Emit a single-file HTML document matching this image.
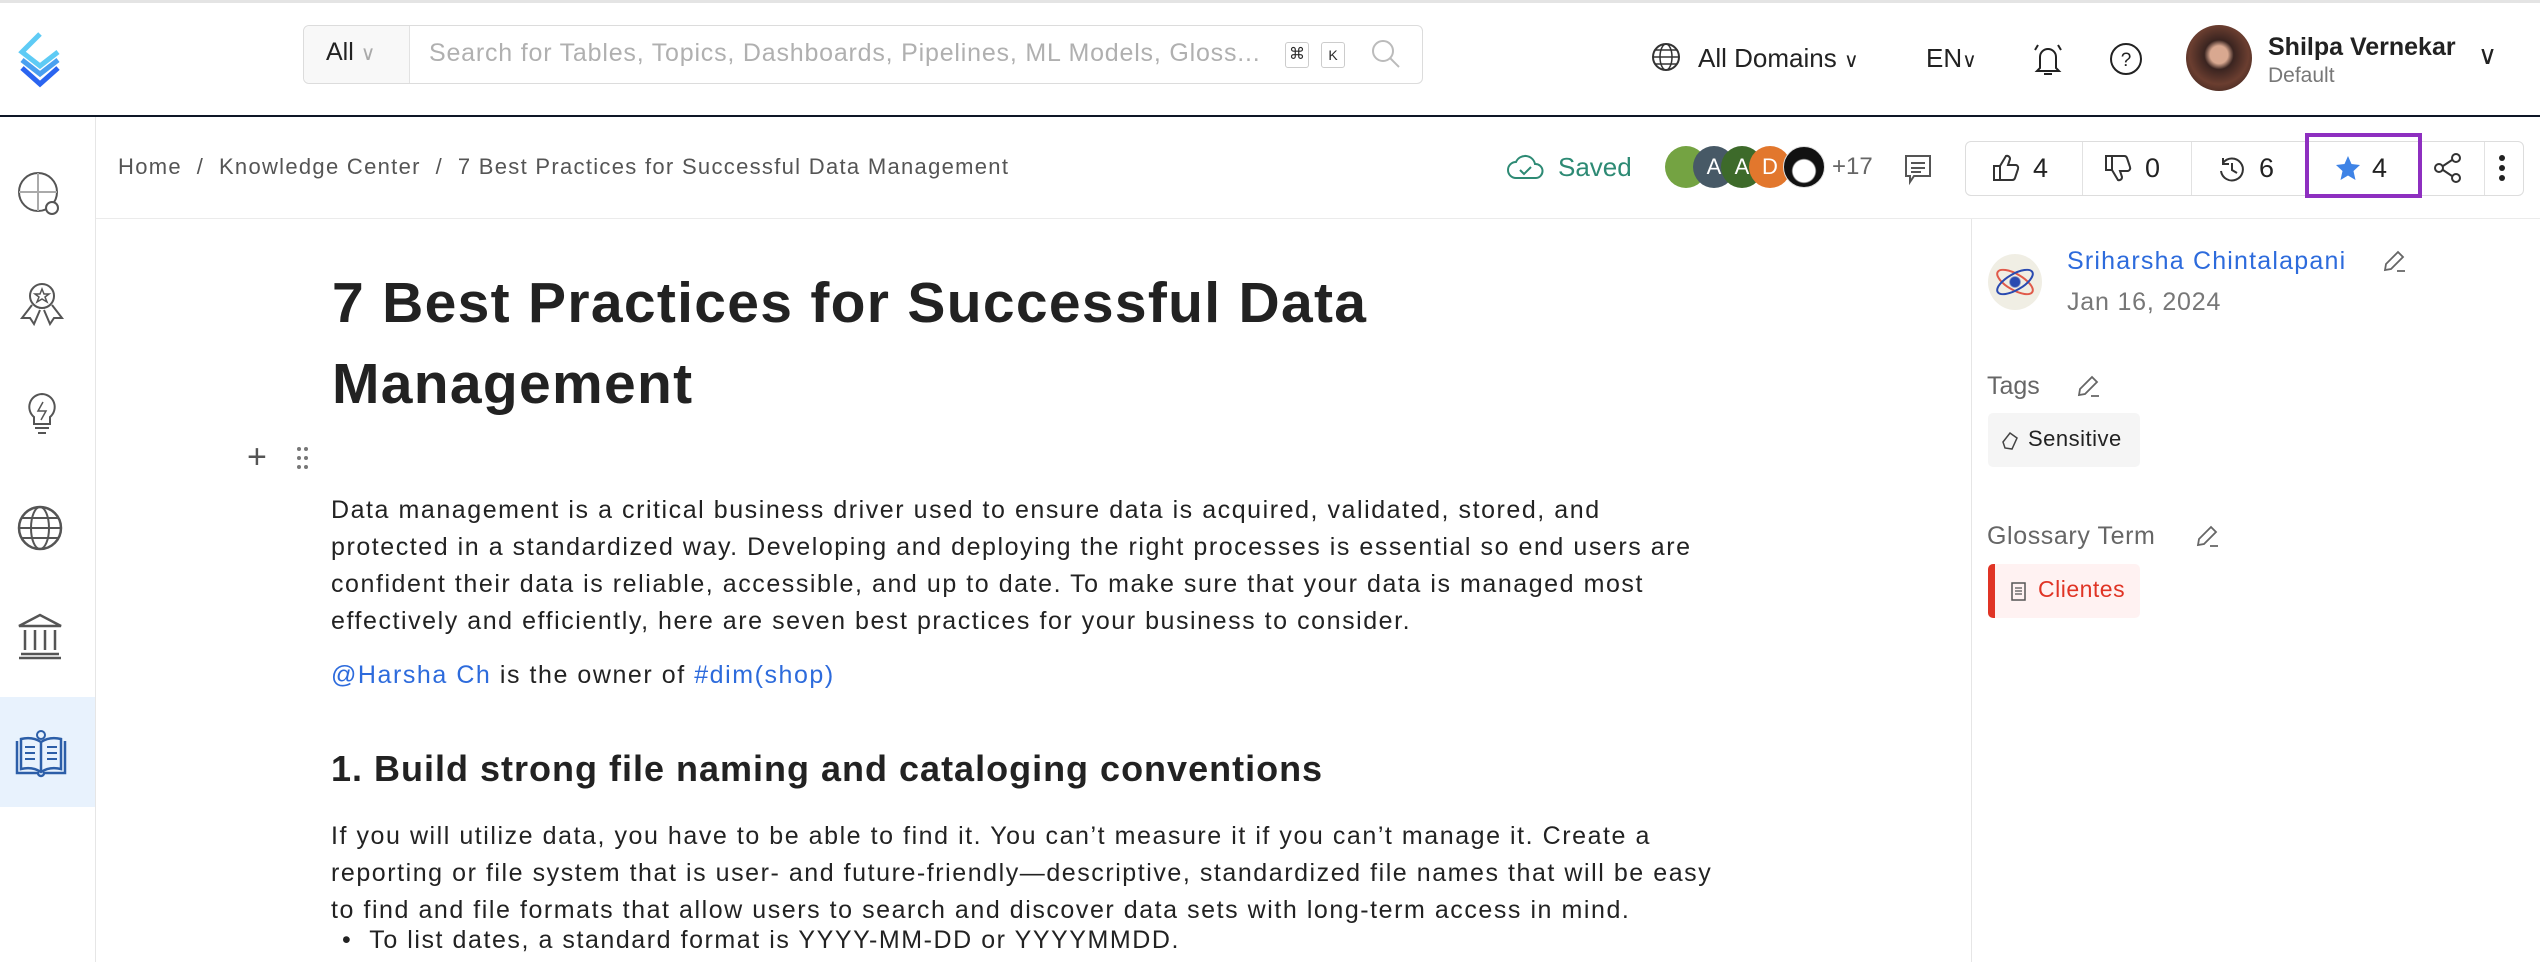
<!DOCTYPE html>
<html><head><meta charset="utf-8"><style>
*{box-sizing:border-box;margin:0;padding:0}
body{width:2540px;height:962px;overflow:hidden;background:#fff;font-family:"Liberation Sans",sans-serif;color:#292929;position:relative}
.a{position:absolute}
svg{display:block}
</style></head><body>
<div class="a" style="left:0;top:0;width:2540px;height:3px;background:#e4e4e4"></div>
<!-- header -->
<svg class="a" style="left:14px;top:30px" width="60" height="58" viewBox="0 0 60 58">
<path d="M26 4 L8 22 L26 36 L44 22" fill="none" stroke="#5ecbf5" stroke-width="5"/>
<path d="M8 30 L26 44 L44 30" fill="none" stroke="#4aa0f0" stroke-width="5"/>
<path d="M8 38 L26 54 L44 38" fill="none" stroke="#2a64f0" stroke-width="5"/>
</svg>
<div class="a" style="left:303px;top:25px;width:1120px;height:59px;border:1px solid #dcdcdc;border-radius:6px"></div>
<div class="a" style="left:304px;top:26px;width:106px;height:57px;background:#f8f8f8;border-right:1px solid #e2e2e2;border-radius:6px 0 0 6px"></div>
<div class="a" style="left:326px;top:38px;font-size:25px;color:#222">All <span style="color:#aaa;font-size:20px">&#8744;</span></div>
<div class="a" style="left:429px;top:39px;font-size:25px;color:#b0b0b0;letter-spacing:0.8px">Search for Tables, Topics, Dashboards, Pipelines, ML Models, Gloss...</div>
<div class="a" style="left:1285px;top:42px;width:24px;height:26px;border:1px solid #ccc;border-radius:3px;font-size:16px;text-align:center;line-height:24px">&#8984;</div>
<div class="a" style="left:1321px;top:42px;width:24px;height:26px;border:1px solid #ccc;border-radius:3px;font-size:14px;text-align:center;line-height:24px">K</div>
<svg class="a" style="left:1370px;top:38px" width="32" height="32"><circle cx="13" cy="13" r="10" fill="none" stroke="#bbb" stroke-width="2"/><path d="M20 20 L29 29" stroke="#bbb" stroke-width="2"/></svg>
<svg class="a" style="left:1650px;top:41px" width="32" height="32"><circle cx="16" cy="16" r="13" fill="none" stroke="#333" stroke-width="2"/><ellipse cx="16" cy="16" rx="6" ry="13" fill="none" stroke="#333" stroke-width="1.5"/><path d="M3 16H29M5 9H27M5 23H27" stroke="#333" stroke-width="1.5"/></svg>
<div class="a" style="left:1698px;top:43px;font-size:26px;color:#222">All Domains <span style="font-size:20px">&#8744;</span></div>
<div class="a" style="left:1926px;top:43px;font-size:26px;color:#222">EN<span style="font-size:20px">&#8744;</span></div>
<svg class="a" style="left:2030px;top:40px" width="36" height="38"><path d="M10 28 V17 a8 8 0 0 1 16 0 V28 L29 31 H7 Z M14 34 h8" fill="none" stroke="#222" stroke-width="2"/><path d="M5 10 L8 5 M31 10 L28 5" stroke="#222" stroke-width="2"/></svg>
<svg class="a" style="left:2108px;top:41px" width="36" height="36"><circle cx="18" cy="18" r="15" fill="none" stroke="#222" stroke-width="2"/><text x="18" y="25" font-size="19" text-anchor="middle" font-family="Liberation Sans" fill="#222">?</text></svg>
<div class="a" style="left:2186px;top:25px;width:66px;height:66px;border-radius:50%;background:radial-gradient(circle at 50% 45%,#d9a890 0 18%,#3a2420 30%,#6b3e30 60%,#2a1a18 100%)"></div>
<div class="a" style="left:2268px;top:33px;font-size:25px;font-weight:bold;color:#222">Shilpa Vernekar</div>
<div class="a" style="left:2268px;top:64px;font-size:21px;color:#777">Default</div>
<div class="a" style="left:2478px;top:40px;font-size:26px;color:#222">&#8744;</div>
<div class="a" style="left:0;top:115px;width:2540px;height:2px;background:#0e1726"></div>
<!-- sidebar -->
<div class="a" style="left:95px;top:117px;width:1px;height:845px;background:#e6e6e6"></div>
<div class="a" style="left:0;top:697px;width:95px;height:110px;background:#e8f2fd"></div>
<svg class="a" style="left:16px;top:170px" width="50" height="50"><circle cx="22" cy="22" r="19" fill="none" stroke="#555" stroke-width="2"/><path d="M3 22 H41 M22 3 V41" stroke="#aaa" stroke-width="2"/><circle cx="36" cy="38" r="6" fill="#fff" stroke="#555" stroke-width="2"/></svg>
<svg class="a" style="left:18px;top:278px" width="48" height="50"><circle cx="24" cy="18" r="12" fill="none" stroke="#555" stroke-width="2"/><path d="M24 11 l2 5 5 0 -4 3 2 5 -5 -3 -5 3 2 -5 -4 -3 5 0z" fill="none" stroke="#555" stroke-width="1.5"/><path d="M14 27 L4 40 L12 40 L16 46 L22 32 M34 27 L44 40 L36 40 L32 46 L26 32" fill="none" stroke="#555" stroke-width="2"/></svg>
<svg class="a" style="left:22px;top:390px" width="40" height="48"><path d="M20 4 a13 13 0 0 0 -8 23 v7 h16 v-7 a13 13 0 0 0 -8 -23z M13 38 h14 M16 43 h8" fill="none" stroke="#555" stroke-width="2"/><path d="M21 12 L16 21 H24 L19 30" fill="none" stroke="#555" stroke-width="1.5"/></svg>
<svg class="a" style="left:15px;top:503px" width="50" height="50"><circle cx="25" cy="25" r="21" fill="none" stroke="#555" stroke-width="2.5"/><ellipse cx="25" cy="25" rx="9" ry="21" fill="none" stroke="#555" stroke-width="2"/><path d="M4 25H46M7 15H43M7 35H43" stroke="#555" stroke-width="2"/></svg>
<svg class="a" style="left:15px;top:610px" width="50" height="50"><path d="M4 16 L25 5 L46 16 Z M6 44 H44 M4 48 H46 M10 20 V40 M20 20 V40 M30 20 V40 M40 20 V40" fill="none" stroke="#555" stroke-width="2.5"/></svg>
<svg class="a" style="left:13px;top:725px" width="56" height="56"><path d="M4 16 V48 H25 a3 3 0 0 0 6 0 H52 V16 M8 14 V44 C16 42 22 43 28 47 C34 43 40 42 48 44 V14 C40 12 34 13 28 17 C22 13 16 12 8 14Z M28 17 V47" fill="none" stroke="#2c5ea8" stroke-width="2.5"/><circle cx="28" cy="10" r="4" fill="none" stroke="#2c5ea8" stroke-width="2"/><path d="M12 22h10M12 28h10M12 34h10M34 22h10M34 28h10M34 34h10" stroke="#2c5ea8" stroke-width="2"/></svg>
<!-- breadcrumb bar -->
<div class="a" style="left:96px;top:218px;width:2444px;height:1px;background:#ebebeb"></div>
<div class="a" style="left:118px;top:154px;font-size:22px;color:#555;letter-spacing:1.3px">Home &nbsp;/&nbsp; Knowledge Center &nbsp;/&nbsp; 7 Best Practices for Successful Data Management</div>
<svg class="a" style="left:1506px;top:152px" width="38" height="32"><path d="M10 26 a8 8 0 0 1 0 -16 a10 10 0 0 1 19 2 a7 7 0 0 1 1 14 Z" fill="none" stroke="#2d8a74" stroke-width="2"/><path d="M14 18 l4 4 7 -7" fill="none" stroke="#2d8a74" stroke-width="2"/></svg>
<div class="a" style="left:1558px;top:152px;font-size:26px;color:#2d8a74">Saved</div>
<div class="a" style="left:1665px;top:146px;width:42px;height:42px;border-radius:50%;background:#74a342"></div>
<div class="a" style="left:1693px;top:146px;width:42px;height:42px;border-radius:50%;background:#475966;color:#fff;font-size:22px;text-align:center;line-height:42px">A</div>
<div class="a" style="left:1721px;top:146px;width:42px;height:42px;border-radius:50%;background:#3d6a2a;color:#fff;font-size:22px;text-align:center;line-height:42px">A</div>
<div class="a" style="left:1749px;top:146px;width:42px;height:42px;border-radius:50%;background:#e2772d;color:#fff;font-size:22px;text-align:center;line-height:42px">D</div>
<div class="a" style="left:1783px;top:146px;width:42px;height:42px;border-radius:50%;background:radial-gradient(circle at 50% 60%,#fff 0 35%,#111 40%);border:1px solid #ddd"></div>
<div class="a" style="left:1832px;top:153px;font-size:24px;color:#666">+17</div>
<svg class="a" style="left:1902px;top:152px" width="32" height="34"><path d="M4 4 H28 V24 H12 L8 30 V24 H4 Z M9 11h14M9 16h14M9 20h10" fill="none" stroke="#555" stroke-width="2"/></svg>
<div class="a" style="left:1965px;top:141px;width:559px;height:55px;border:1px solid #ddd;border-radius:6px"></div>
<div class="a" style="left:2082px;top:142px;width:1px;height:53px;background:#e2e2e2"></div>
<div class="a" style="left:2191px;top:142px;width:1px;height:53px;background:#e2e2e2"></div>
<div class="a" style="left:2305px;top:142px;width:1px;height:53px;background:#e2e2e2"></div>
<div class="a" style="left:2484px;top:142px;width:1px;height:53px;background:#e2e2e2"></div>
<svg class="a" style="left:1991px;top:153px" width="30" height="30"><path d="M3 13 H9 V27 H3 Z M9 13 L15 3 a3 3 0 0 1 4 3 L17 12 H25 a3 3 0 0 1 2 4 L24 25 a3 3 0 0 1 -3 2 H9" fill="none" stroke="#333" stroke-width="2"/></svg>
<div class="a" style="left:2033px;top:153px;font-size:27px;color:#222">4</div>
<svg class="a" style="left:2103px;top:153px" width="30" height="30"><g transform="translate(0,30) scale(1,-1)"><path d="M3 13 H9 V27 H3 Z M9 13 L15 3 a3 3 0 0 1 4 3 L17 12 H25 a3 3 0 0 1 2 4 L24 25 a3 3 0 0 1 -3 2 H9" fill="none" stroke="#333" stroke-width="2"/></g></svg>
<div class="a" style="left:2145px;top:153px;font-size:27px;color:#222">0</div>
<svg class="a" style="left:2218px;top:155px" width="28" height="28"><path d="M5 8 A11 11 0 1 1 3 16 M5 3 V9 H11 M14 8 V15 L19 18" fill="none" stroke="#333" stroke-width="2"/></svg>
<div class="a" style="left:2259px;top:153px;font-size:27px;color:#222">6</div>
<div class="a" style="left:2305px;top:133px;width:117px;height:65px;border:4px solid #8e2fc0"></div>
<svg class="a" style="left:2334px;top:154px" width="28" height="28"><path d="M14 2 L17.5 10 L26 11 L19.5 17 L21.5 26 L14 21.5 L6.5 26 L8.5 17 L2 11 L10.5 10 Z" fill="#3e83e6"/></svg>
<div class="a" style="left:2372px;top:153px;font-size:27px;color:#222">4</div>
<svg class="a" style="left:2432px;top:152px" width="32" height="32"><circle cx="24" cy="6" r="4" fill="none" stroke="#333" stroke-width="2"/><circle cx="7" cy="16" r="4" fill="none" stroke="#333" stroke-width="2"/><circle cx="24" cy="26" r="4" fill="none" stroke="#333" stroke-width="2"/><path d="M11 14 L20 8 M11 18 L20 24" stroke="#333" stroke-width="2"/></svg>
<svg class="a" style="left:2496px;top:152px" width="12" height="32"><circle cx="6" cy="6" r="3" fill="#222"/><circle cx="6" cy="16" r="3" fill="#222"/><circle cx="6" cy="26" r="3" fill="#222"/></svg>
<!-- right panel -->
<div class="a" style="left:1971px;top:219px;width:1px;height:743px;background:#e6e6e6"></div>
<div class="a" style="left:1988px;top:254px;width:54px;height:56px;border-radius:50%;background:radial-gradient(circle,#2a4ab0 0 12%,#f0eee4 16%)"></div>
<svg class="a" style="left:1990px;top:258px" width="50" height="48"><ellipse cx="25" cy="24" rx="20" ry="8" fill="none" stroke="#e05a4a" stroke-width="2" transform="rotate(30 25 24)"/><ellipse cx="25" cy="24" rx="20" ry="8" fill="none" stroke="#2a4ab0" stroke-width="2" transform="rotate(-30 25 24)"/></svg>
<div class="a" style="left:2067px;top:247px;font-size:25px;color:#2d6bdc;letter-spacing:1.2px">Sriharsha Chintalapani</div>
<svg class="a" style="left:2381px;top:248px" width="26" height="26"><path d="M4 22 L5 16 L17 4 L22 9 L10 21 Z M16 23 H24" fill="none" stroke="#666" stroke-width="1.8"/></svg>
<div class="a" style="left:2067px;top:288px;font-size:25px;color:#777;letter-spacing:0.8px">Jan 16, 2024</div>
<div class="a" style="left:1987px;top:372px;font-size:25px;color:#666">Tags</div>
<svg class="a" style="left:2075px;top:373px" width="26" height="26"><path d="M4 22 L5 16 L17 4 L22 9 L10 21 Z M16 23 H24" fill="none" stroke="#666" stroke-width="1.8"/></svg>
<div class="a" style="left:1988px;top:413px;width:152px;height:54px;background:#f5f5f5;border-radius:5px"></div>
<svg class="a" style="left:2000px;top:430px" width="20" height="22"><path d="M3 12 L10 3 L17 8 L12 19 L5 18 Z" fill="none" stroke="#444" stroke-width="1.5"/></svg>
<div class="a" style="left:2028px;top:426px;font-size:22px;color:#222;letter-spacing:0.5px">Sensitive</div>
<div class="a" style="left:1987px;top:522px;font-size:25px;color:#666;letter-spacing:0.6px">Glossary Term</div>
<svg class="a" style="left:2194px;top:523px" width="26" height="26"><path d="M4 22 L5 16 L17 4 L22 9 L10 21 Z M16 23 H24" fill="none" stroke="#666" stroke-width="1.8"/></svg>
<div class="a" style="left:1988px;top:564px;width:152px;height:54px;background:#fff2f2;border-radius:5px;border-left:7px solid #e03425"></div>
<svg class="a" style="left:2010px;top:581px" width="18" height="22"><rect x="2" y="2" width="13" height="17" fill="none" stroke="#555" stroke-width="1.5"/><path d="M5 7h7M5 10h7M5 13h7" stroke="#555" stroke-width="1.3"/></svg>
<div class="a" style="left:2038px;top:576px;font-size:23px;color:#e03425;letter-spacing:0.5px">Clientes</div>
<!-- main content -->
<div class="a" style="left:332px;top:263px;font-size:57px;font-weight:bold;color:#222;line-height:81px;width:1400px;letter-spacing:1.3px">7 Best Practices for Successful Data<br>Management</div>
<div class="a" style="left:247px;top:438px;font-size:34px;color:#555">+</div>
<svg class="a" style="left:296px;top:446px" width="14" height="24"><g fill="#777"><circle cx="3" cy="3" r="2"/><circle cx="10" cy="3" r="2"/><circle cx="3" cy="12" r="2"/><circle cx="10" cy="12" r="2"/><circle cx="3" cy="21" r="2"/><circle cx="10" cy="21" r="2"/></g></svg>
<div class="a" style="left:331px;top:492px;width:1500px;font-size:25px;line-height:37px;color:#222;letter-spacing:1.55px">Data management is a critical business driver used to ensure data is acquired, validated, stored, and<br>protected in a standardized way. Developing and deploying the right processes is essential so end users are<br>confident their data is reliable, accessible, and up to date. To make sure that your data is managed most<br>effectively and efficiently, here are seven best practices for your business to consider.</div>
<div class="a" style="left:331px;top:661px;font-size:25px;color:#222;letter-spacing:1.55px"><span style="color:#2d6bdc">@Harsha Ch</span> is the owner of <span style="color:#2d6bdc">#dim(shop)</span></div>
<div class="a" style="left:331px;top:748px;font-size:36px;font-weight:bold;color:#222;letter-spacing:1px">1. Build strong file naming and cataloging conventions</div>
<div class="a" style="left:331px;top:818px;width:1500px;font-size:25px;line-height:37px;color:#222;letter-spacing:1.55px">If you will utilize data, you have to be able to find it. You can’t measure it if you can’t manage it. Create a<br>reporting or file system that is user- and future-friendly—descriptive, standardized file names that will be easy<br>to find and file formats that allow users to search and discover data sets with long-term access in mind.</div>
<div class="a" style="left:342px;top:926px;font-size:25px;color:#222;letter-spacing:1.55px">•&nbsp;&nbsp;To list dates, a standard format is YYYY-MM-DD or YYYYMMDD.</div>
</body></html>
